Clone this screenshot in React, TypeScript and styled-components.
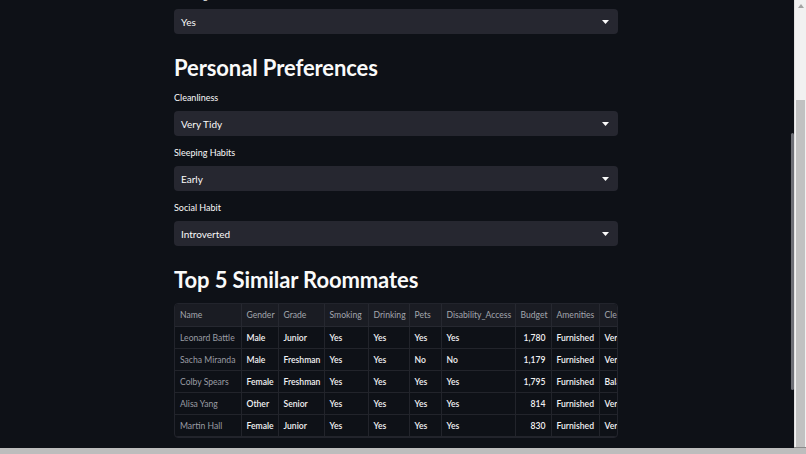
import styled, { createGlobalStyle } from "styled-components";

const GlobalStyle = createGlobalStyle`
    html, body {
        margin : 0;
        padding : 0;
        background : #0e1117;
        overflow : hidden;
        font-family : Lato, 'Noto Sans', sans-serif;
    }
`

const Window = styled.div`
    width : 806px;
    height : 454px;
    display : flex;
    flex-direction : column;
`

const Viewport = styled.div`
    flex : 1;
    display : flex;
    flex-direction : row;
    min-height : 0;
`

const Canvas = styled.div`
    position : relative;
    flex : 1;
    height : 448px;
    overflow : hidden;
    background : #0e1117;
    display : flex;
    justify-content : center;
`

const BottomEdge = styled.div`
    height : 6px;
    background : #bdbdbd;
    border-top : 1px solid #8a8a8a;
`

const Main = styled.div`
    width : 444px;
    margin-right : 2px;
    display : flex;
    flex-direction : column;
    gap : 11px;
    margin-top : -10px;
`

const Field = styled.div`
    display : flex;
    flex-direction : column;
    gap : 7px;
`

const Label = styled.label`
    font-size : 9px;
    line-height : 12px;
    color : #fafafa;
`

const Select = styled.div`
    height : 25px;
    background : #262730;
    border-radius : 4px;
    display : flex;
    align-items : center;
    justify-content : space-between;
    padding : 0 9px 0 7px;
    font-size : 10px;
    color : #fafafa;
`

const Heading = styled.h2`
    margin : 10px 0 0 0;
    font-size : 22px;
    line-height : 26px;
    font-weight : 700;
    color : #fafafa;
    letter-spacing : -0.1px;
`

const TableFrame = styled.div`
    width : 444px;
    margin-top : -1px;
    overflow : hidden;
    border : 1px solid #22242c;
    border-radius : 4px;
    box-sizing : border-box;
`

const Table = styled.table`
    width : 488px;
    border-collapse : collapse;
    table-layout : fixed;
    font-size : 8.6px;
`

const HeadCell = styled.th`
    height : 22px;
    padding : 0 0 0 5px;
    text-align : left;
    font-weight : 400;
    color : #a3a6ae;
    background : #1a1c23;
    border-right : 1px solid #262830;
    border-bottom : 1px solid #262830;
    white-space : nowrap;
    overflow : hidden;
`

const Cell = styled.td<{ $index?: boolean; $right?: boolean }>`
    height : 21px;
    padding : ${(p) => (p.$right ? "0 5px 0 0" : "0 0 0 5px")};
    text-align : ${(p) => (p.$right ? "right" : "left")};
    color : ${(p) => (p.$index ? "#9a9ca4" : "#f2f2f4")};
    font-weight : ${(p) => (p.$index ? 400 : 600)};
    border-right : 1px solid #22242b;
    border-bottom : 1px solid #22242b;
    white-space : nowrap;
    overflow : hidden;
`

const InnerScroll = styled.div`
    position : absolute;
    right : 0;
    top : 133px;
    width : 3px;
    height : 257px;
    background : #6e7077;
    border-radius : 2px;
`

const ScrollTrack = styled.div`
    width : 12px;
    height : 448px;
    background : #f1f1f1;
    border-left : 1px solid #e0e0e0;
    box-sizing : border-box;
    display : flex;
    flex-direction : column;
    align-items : center;
`

const ScrollArrow = styled.div`
    height : 11px;
    display : flex;
    align-items : center;
    justify-content : center;
`

const ScrollGap = styled.div`
    height : 89px;
`

const ScrollThumb = styled.div`
    width : 9px;
    flex : 1;
    background : #c1c1c1;
`

const Chevron = () => (
    <svg width="7" height="4" viewBox="0 0 7 4">
        <path d="M0 0 L7 0 L3.5 4 Z" fill="#fafafa" />
    </svg>
)

const Arrow = ({ up }: { up?: boolean }) => (
    <svg width="6" height="4" viewBox="0 0 6 4">
        <path d={up ? "M0 4 L6 4 L3 0 Z" : "M0 0 L6 0 L3 4 Z"} fill="#a3a3a3" />
    </svg>
)

const columns = [
    { name: "Name", w: 66 },
    { name: "Gender", w: 37 },
    { name: "Grade", w: 46 },
    { name: "Smoking", w: 44 },
    { name: "Drinking", w: 41 },
    { name: "Pets", w: 32 },
    { name: "Disability_Access", w: 74 },
    { name: "Budget", w: 36 },
    { name: "Amenities", w: 48 },
    { name: "Cleanliness", w: 64 },
]

const roommates = [
    ["Leonard Battle", "Male", "Junior", "Yes", "Yes", "Yes", "Yes", "1,780", "Furnished", "Very Tidy"],
    ["Sacha Miranda", "Male", "Freshman", "Yes", "Yes", "No", "No", "1,179", "Furnished", "Very Tidy"],
    ["Colby Spears", "Female", "Freshman", "Yes", "Yes", "Yes", "Yes", "1,795", "Furnished", "Balanced"],
    ["Alisa Yang", "Other", "Senior", "Yes", "Yes", "Yes", "Yes", "814", "Furnished", "Very Tidy"],
    ["Martin Hall", "Female", "Junior", "Yes", "Yes", "Yes", "Yes", "830", "Furnished", "Very Tidy"],
]

const fields = [
    { label: "Cleanliness", value: "Very Tidy" },
    { label: "Sleeping Habits", value: "Early" },
    { label: "Social Habit", value: "Introverted" },
]

const SelectBox = ({ label, value }: { label: string; value: string }) => (
    <Field>
        <Label>{label}</Label>
        <Select>
            <span>{value}</span>
            <Chevron />
        </Select>
    </Field>
)

const App = () => {
    return (
        <Window>
            <GlobalStyle />
            <Viewport>
                <Canvas>
                    <Main>
                        <SelectBox label="Smoking" value="Yes" />
                        <Heading>Personal Preferences</Heading>
                        {fields.map((f) => (
                            <SelectBox key={f.label} label={f.label} value={f.value} />
                        ))}
                        <Heading>Top 5 Similar Roommates</Heading>
                        <TableFrame>
                            <Table>
                                <colgroup>
                                    {columns.map((c) => (
                                        <col key={c.name} style={{ width: c.w }} />
                                    ))}
                                </colgroup>
                                <thead>
                                    <tr>
                                        {columns.map((c) => (
                                            <HeadCell key={c.name}>{c.name}</HeadCell>
                                        ))}
                                    </tr>
                                </thead>
                                <tbody>
                                    {roommates.map((row) => (
                                        <tr key={row[0]}>
                                            {row.map((v, i) => (
                                                <Cell key={i} $index={i === 0} $right={i === 7}>{v}</Cell>
                                            ))}
                                        </tr>
                                    ))}
                                </tbody>
                            </Table>
                        </TableFrame>
                    </Main>
                    <InnerScroll />
                </Canvas>
                <ScrollTrack>
                    <ScrollArrow><Arrow up /></ScrollArrow>
                    <ScrollGap />
                    <ScrollThumb />
                </ScrollTrack>
            </Viewport>
            <BottomEdge />
        </Window>
    )
}

export default App;
